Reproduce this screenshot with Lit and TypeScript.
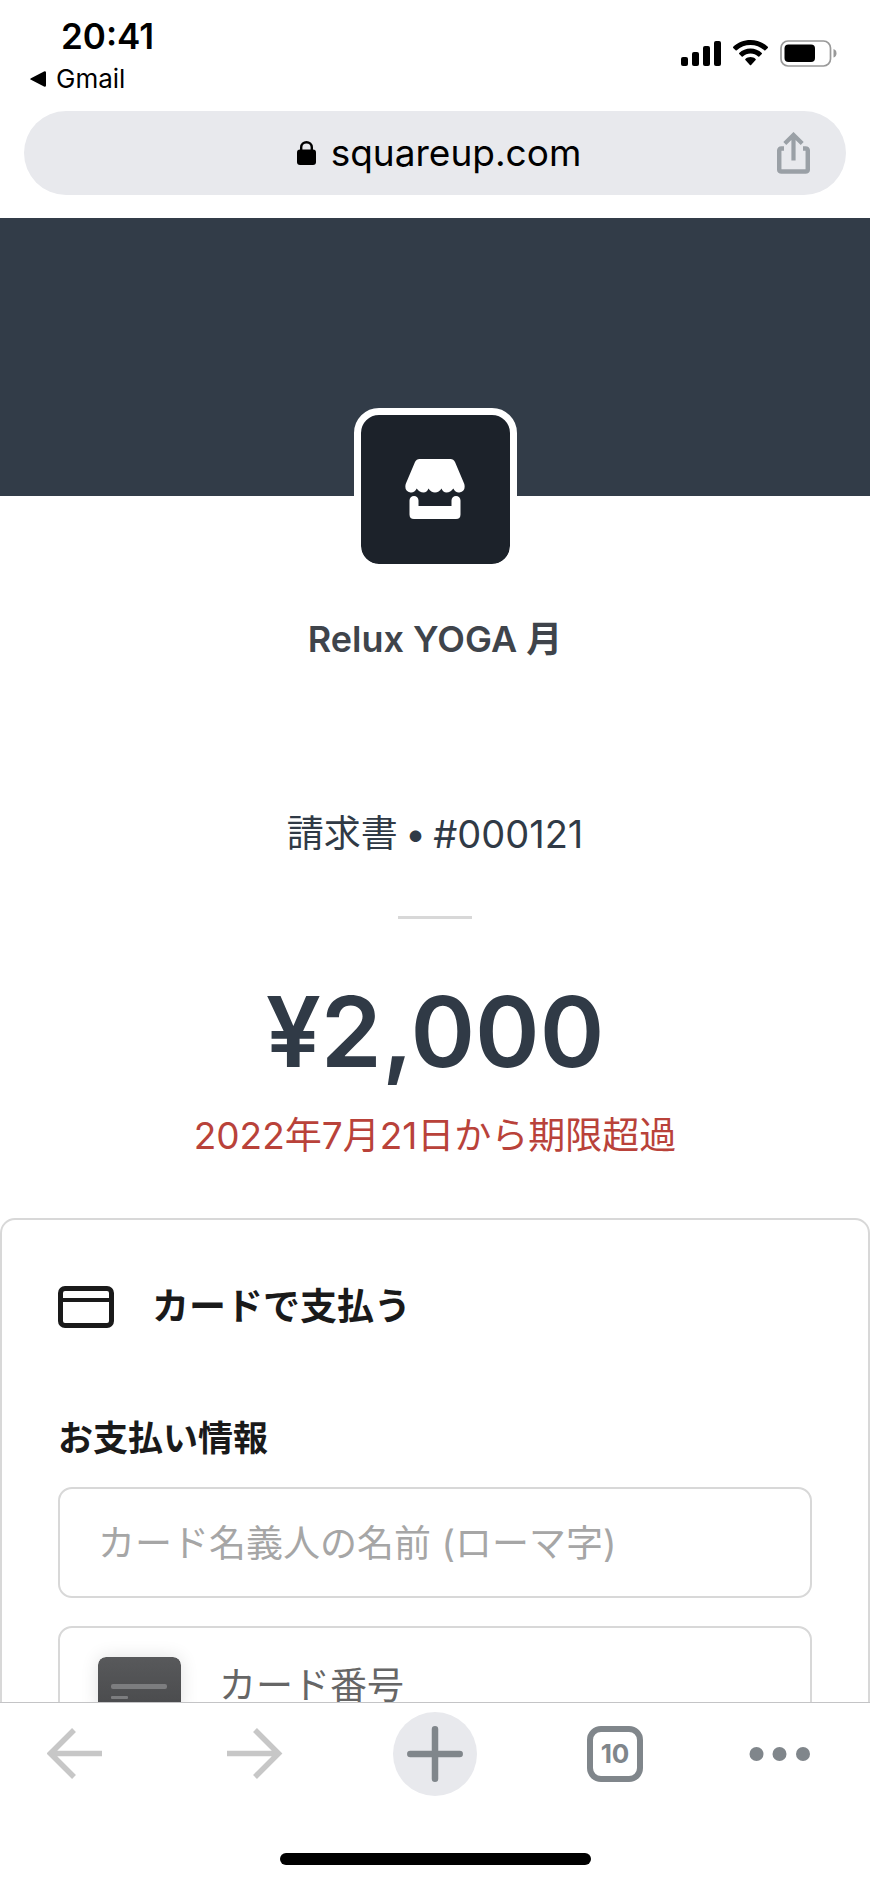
import { LitElement, html, css } from "lit";
import { customElement } from "lit/decorators.js";

@customElement("status-bar")
class StatusBar extends LitElement {
  static styles = css`
    :host { display: flex; justify-content: space-between; padding: 19px 33px 0 30px; color: #000; }
    .left { display: flex; flex-direction: column; }
    .time { font-size: 35px; line-height: 34px; font-weight: 600; padding-left: 31px; }
    .back { display: flex; align-items: center; gap: 10px; font-size: 26px; line-height: 32px; margin-top: 10px; color: inherit; text-decoration: none; }
    .right { display: flex; gap: 12px; padding-top: 21px; height: 27px; }
  `;
  render() {
    return html`
      <div class="left">
        <span class="time">20:41</span>
        <a class="back" href="#">
          <svg width="16" height="16" viewBox="0 0 16 16"><path d="M1 7.2 14 .4Q16 0 16 1.6V14.4Q16 16 14 15.6L1 8.8Q-.6 8 1 7.2Z" /></svg>Gmail</a>
      </div>
      <div class="right">
        <svg width="40" height="27" viewBox="0 0 40 27">
          <rect x="0" y="17" width="7" height="9" rx="2" /><rect x="11" y="12" width="7" height="14" rx="2" />
          <rect x="22" y="6" width="7" height="20" rx="2" /><rect x="33" y="1" width="7" height="25" rx="2" />
        </svg>
        <svg width="35" height="27" viewBox="0 0 35 27">
          <path d="M17.500 0C10.900 0 4.600 2.600 0.200 6.800Q-.3 7.300.2 7.900L2.600 10.300Q3.200 10.800 3.800 10.300C7.500 6.900 12.300 5 17.500 5S27.500 6.900 31.200 10.300Q31.800 10.800 32.400 10.300L34.800 7.900Q35.300 7.300 34.800 6.800C30.400 2.600 24.100 0 17.500 0Z" />
          <path d="M17.500 8.500C13.200 8.500 9.200 10.200 6.200 12.900Q5.700 13.500 6.200 14L8.700 16.400Q9.200 16.900 9.800 16.400C11.900 14.500 14.600 13.400 17.500 13.400S23.100 14.500 25.200 16.400Q25.800 16.900 26.300 16.400L28.800 14Q29.300 13.500 28.800 12.900C25.800 10.200 21.800 8.500 17.500 8.500Z" />
          <path d="M17.500 17C15.600 17 13.800 17.700 12.400 18.900Q11.900 19.400 12.400 20L16.900 24.900Q17.500 25.500 18.100 24.900L22.600 20Q23.100 19.400 22.600 18.900C21.200 17.700 19.400 17 17.500 17Z" />
        </svg>
        <svg width="57" height="27" viewBox="0 0 57 27">
          <rect x="1" y="1" width="49.500" height="25" rx="7" fill="none" stroke="#999" stroke-width="1.700" />
          <rect x="4.500" y="4.500" width="30.500" height="17.500" rx="4" />
          <path d="M53.500 9Q56.500 10 56.500 13.300T53.500 17.600Z" fill="#999" />
        </svg>
      </div>
    `;
  }
}

@customElement("address-bar")
class AddressBar extends LitElement {
  static styles = css`
    :host { display: block; padding: 16px 24px 23px; }
    .pill { display: grid; grid-template-columns: 1fr auto 1fr; align-items: center; height: 84px; border-radius: 42px; background: #e8e9ed; padding: 0 36px 0 44px; }
    .site { grid-column: 2; display: flex; align-items: center; gap: 15px; font-size: 37px; line-height: 48px; color: #000; }
    .share { justify-self: end; border: 0; background: none; padding: 0; display: flex; }
  `;
  render() {
    return html`
      <div class="pill">
        <div class="site">
          <svg width="19" height="25" viewBox="0 0 19 25"><rect y="8.500" width="19" height="15.500" rx="3" /><path d="M4.200 10V6.200a5.300 5 0 0 1 10.600 0V10" fill="none" stroke="#000" stroke-width="2.400" /></svg>
          <span>squareup.com</span>
        </div>
        <button class="share" aria-label="共有">
          <svg width="33" height="42" viewBox="0 0 33 42" fill="none" stroke="#9aa0a6" stroke-width="4.500">
            <path d="M7 16.500H4.500Q2.200 16.500 2.200 19V37Q2.200 39.400 4.500 39.400H28.500Q30.800 39.400 30.800 37V19Q30.800 16.500 28.500 16.500H26" />
            <path d="M16.500 28.500V4M7.800 11.500 16.500 2.900 25.200 11.500" stroke-width="4.200" />
          </svg>
        </button>
      </div>
    `;
  }
}

@customElement("invoice-page")
class InvoicePage extends LitElement {
  static styles = css`
    :host { display: block; flex: 1 1 0; min-height: 0; overflow: hidden; color: #303a46; }
    .hero { height: 278px; background: #323c48; }
    .summary { display: flex; flex-direction: column; align-items: center; text-align: center; }
    .logo { display: grid; place-items: center; width: 149px; height: 149px; border: 7px solid #fff; border-radius: 25px; background: #1c222a; background-clip: padding-box; margin-top: -88px; }
    .merchant { margin: 44px 0 0; font-size: 36px; line-height: 48px; font-weight: 600; color: #3f444b; }
    .number { display: flex; align-items: center; gap: 9px; margin: 147px 0 0; font-size: 37px; line-height: 48px; font-weight: 400; }
    .dot { font-weight: 700; }
    .digits { font-size: 38px; }
    .rule { width: 74px; height: 3px; margin: 58px 0 0; border: 0; background: #d8d8d8; }
    .amount { margin: 53px 0 0; font-size: 98px; line-height: 120px; font-weight: 600; }
    .overdue { margin: 20px 0 0; font-size: 37px; line-height: 48px; font-weight: 400; color: #b9423a; }
    .card { margin-top: 58px; padding: 63px 56px 80px; border: 2px solid #d8d8d8; border-radius: 15px; color: #1a1a1a; }
    .method { display: flex; align-items: center; gap: 38px; margin: 0; font-size: 37px; line-height: 48px; font-weight: 600; }
    .heading { margin: 83px 0 0; font-size: 35px; line-height: 48px; font-weight: 600; }
    .field { display: flex; align-items: center; gap: 38px; box-sizing: border-box; height: 111px; padding: 0 38px; border: 2px solid #d8d8d8; border-radius: 14px; }
    .name { margin-top: 25px; }
    .pan { height: 118px; margin-top: 28px; }
    .input { flex: 1; min-width: 0; border: 0; outline: 0; padding: 2px 0 0; background: none; font: inherit; font-size: 37px; line-height: 48px; font-weight: 400; color: #1a1a1a; }
    .input::placeholder { color: #a6a6a6; opacity: 1; }
    .pan .input::placeholder { color: #666; }
    .plate { border-radius: 8px; box-shadow: 0 0 18px rgba(0, 0, 0, 0.12); }
  `;
  render() {
    return html`
      <div class="hero"></div>
      <section class="summary">
        <div class="logo">
          <svg width="60" height="61" viewBox="0 0 60 61" fill="#fff">
            <path d="M14.500 0H45.500Q48.500 0 50 3L59.300 25Q61 32.500 54.500 33.500Q50.500 34 48.300 29.500Q45.500 33.500 41.500 33.500Q38 33.500 36.500 29.500Q34 33.500 30 33.500Q26 33.500 23.500 29.500Q22 33.500 18.500 33.500Q14.500 33.500 11.700 29.500Q9.500 34 5.500 33.500Q-1 32.500.7 25L10 3Q11.500 0 14.500 0Z" />
            <path d="M4.500 41.500a4.500 4.500 0 0 1 9 0V47H46.500V41.500a4.500 4.500 0 0 1 9 0V55.500Q55.500 60 51 60H9Q4.500 60 4.500 55.500Z" />
          </svg>
        </div>
        <h1 class="merchant">Relux YOGA 月</h1>
        <p class="number"><span>請求書</span><span class="dot">•</span><span class="digits">#000121</span></p>
        <hr class="rule" />
        <p class="amount">¥2,000</p>
        <p class="overdue">2022年7月21日から期限超過</p>
      </section>
      <form class="card">
        <h2 class="method">
          <svg width="56" height="42" viewBox="0 0 56 42" fill="none" stroke="#1a1a1a"><rect x="2.500" y="2.500" width="51" height="37" rx="4.500" stroke-width="5" /><path d="M3 14H53" stroke-width="4" /></svg>
          <span>カードで支払う</span>
        </h2>
        <h3 class="heading">お支払い情報</h3>
        <label class="field name"><input class="input" aria-label="カード名義人の名前" placeholder="カード名義人の名前 (ローマ字)" /></label>
        <label class="field pan">
          <svg class="plate" width="83" height="57" viewBox="0 0 83 57">
            <defs><linearGradient id="plate" x1="0" y1="0" x2="0" y2="1"><stop stop-color="#58595b" /><stop offset="1" stop-color="#48494b" /></linearGradient></defs>
            <rect width="83" height="57" rx="8" fill="url(#plate)" />
            <rect x="13" y="27" width="56" height="5" rx="2" fill="#7c7d7f" /><rect x="13" y="39" width="17" height="3" rx="1" fill="#7c7d7f" />
          </svg>
          <input class="input" aria-label="カード番号" placeholder="カード番号" inputmode="numeric" />
        </label>
      </form>
    `;
  }
}

@customElement("browser-toolbar")
class BrowserToolbar extends LitElement {
  static styles = css`
    :host { display: block; border-top: 1px solid #c4c4c6; background: #fff; padding: 9px 29px 19px; }
    .row { display: flex; justify-content: space-between; }
    .btn { display: flex; align-items: center; justify-content: center; width: 92px; height: 84px; border: 0; padding: 0; background: none; }
    .more { justify-content: flex-start; }
    .plus { display: grid; place-items: center; width: 84px; height: 84px; border-radius: 50%; background: #e8e9ed; }
    .tabs { display: grid; place-items: center; box-sizing: border-box; width: 56px; height: 56px; border: 6px solid #80868b; border-radius: 14px; font-family: Inter, sans-serif; font-size: 26px; line-height: 32px; font-weight: 700; color: #80868b; }
    .home { width: 311px; height: 12px; margin: 57px auto 0; border-radius: 6px; background: #000; }
  `;
  render() {
    return html`
      <nav class="row">
        <button class="btn" aria-label="戻る"><svg width="56" height="52" viewBox="0 0 56 52" fill="none" stroke="#c7c7c7" stroke-width="5.500"><path d="M55 25.500H5M27 2 3.500 25.500 27 49" /></svg></button>
        <button class="btn" aria-label="進む"><svg width="56" height="52" viewBox="0 0 56 52" fill="none" stroke="#c7c7c7" stroke-width="5.500"><path d="M0 25.500H51M28 2 51.500 25.500 28 49" /></svg></button>
        <button class="btn" aria-label="新しいタブ"><span class="plus"><svg width="56" height="56" viewBox="0 0 56 56" fill="none" stroke="#80868b" stroke-width="6.500" stroke-linecap="round"><path d="M28 3.300V52.700M3.300 28H52.700" /></svg></span></button>
        <button class="btn" aria-label="タブ一覧"><span class="tabs">10</span></button>
        <button class="btn more" aria-label="その他"><svg width="62" height="14" viewBox="0 0 62 14" fill="#80868b"><circle cx="7.500" cy="7" r="7" /><circle cx="30.500" cy="7" r="7" /><circle cx="54" cy="7" r="7" /></svg></button>
      </nav>
      <div class="home"></div>
    `;
  }
}

@customElement("app-root")
class AppRoot extends LitElement {
  static styles = css`
    :host { display: flex; flex-direction: column; height: 100vh; background: #fff; font-family: Inter, "Noto Sans CJK JP", sans-serif; }
  `;
  render() {
    return html`
      <status-bar></status-bar>
      <address-bar></address-bar>
      <invoice-page></invoice-page>
      <browser-toolbar></browser-toolbar>
    `;
  }
}
